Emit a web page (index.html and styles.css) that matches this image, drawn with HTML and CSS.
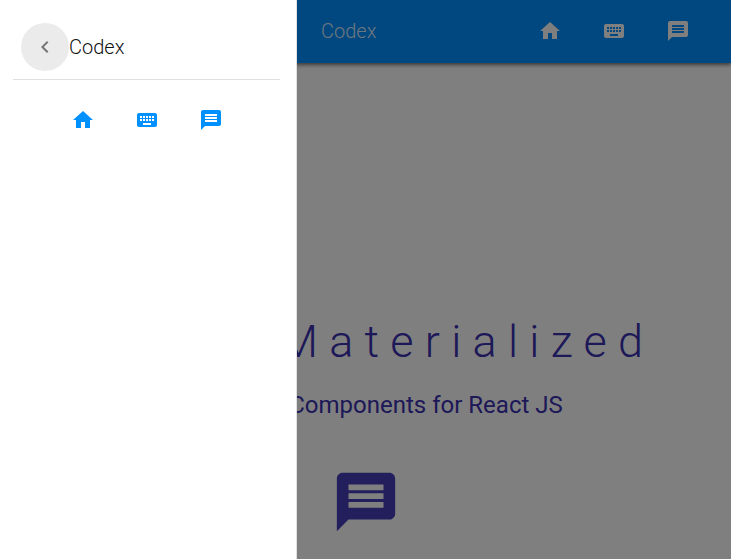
FILE: index.html
```html
<!DOCTYPE html>
<html lang="en">
<head>
<meta charset="utf-8">
<title>Codex</title>
<link rel="stylesheet" href="styles.css">
</head>
<body>
<svg class="sprite" aria-hidden="true">
  <symbol id="home" viewBox="0 0 24 24"><path d="M10 20v-6h4v6h5v-8h3L12 3 2 12h3v8z"/></symbol>
  <symbol id="keyboard" viewBox="0 0 24 24"><path d="M20 5H4c-1.1 0-1.99.9-1.99 2L2 17c0 1.1.9 2 2 2h16c1.1 0 2-.9 2-2V7c0-1.1-.9-2-2-2zm-9 3h2v2h-2V8zm0 3h2v2h-2v-2zM8 8h2v2H8V8zm0 3h2v2H8v-2zm-1 2H5v-2h2v2zm0-3H5V8h2v2zm9 7H8v-2h8v2zm0-4h-2v-2h2v2zm0-3h-2V8h2v2zm3 3h-2v-2h2v2zm0-3h-2V8h2v2z"/></symbol>
  <symbol id="chat" viewBox="0 0 24 24"><path d="M20 2H4c-1.1 0-1.99.9-1.99 2L2 22l4-4h14c1.1 0 2-.9 2-2V4c0-1.1-.9-2-2-2zm-2 12H6v-2h12v2zm0-3H6V9h12v2zm0-3H6V6h12v2z"/></symbol>
  <symbol id="back" viewBox="0 0 24 24"><path d="M15.41 7.41 14 6l-6 6 6 6 1.41-1.41L10.83 12z"/></symbol>
</svg>
<div class="page">
  <header class="appbar">
    <span class="brand">Codex</span>
    <nav class="links">
      <svg><use href="#home"/></svg>
      <svg><use href="#keyboard"/></svg>
      <svg><use href="#chat"/></svg>
    </nav>
  </header>
  <main class="hero">
    <h1>Materialized</h1>
    <h2>Components for React JS</h2>
    <svg class="hero-icon"><use href="#chat"/></svg>
  </main>
</div>
<div class="backdrop"></div>
<aside class="drawer">
  <div class="drawer-head">
    <button class="back" aria-label="Close"><svg><use href="#back"/></svg></button>
    <span class="brand">Codex</span>
  </div>
  <nav class="links drawer-links">
    <svg><use href="#home"/></svg>
    <svg><use href="#keyboard"/></svg>
    <svg><use href="#chat"/></svg>
  </nav>
</aside>
</body>
</html>
```
FILE: styles.css
```css
* { box-sizing: border-box; }
body { margin: 0; height: 559px; overflow: hidden; font-family: Roboto, sans-serif; }
svg { display: block; width: 24px; height: 24px; fill: currentColor; }
.sprite { position: absolute; width: 0; height: 0; }
.page { height: 559px; display: flex; flex-direction: column; background: #fff; }
.brand { font-size: 20px; line-height: 32px; font-weight: 300; }
.appbar { height: 63px; flex: none; display: flex; align-items: center; justify-content: space-between; padding: 0 41px 2px 321px; background: #0091ff; color: #fff; box-shadow: 0 2px 4px rgba(0,0,0,.35), 0 1px 4px rgba(0,0,0,.35); }
.appbar .brand { color: rgba(255,255,255,.87); }
.links { display: flex; gap: 40px; }
.hero { display: flex; flex-direction: column; align-items: center; padding-top: 247px; color: #3b30b0; }
h1, h2 { margin: 0; white-space: nowrap; }
h1 { width: 372px; font-size: 45px; line-height: 64px; font-weight: 300; letter-spacing: .25em; margin-left: 199px; }
h2 { font-size: 24px; line-height: 32px; font-weight: 400; margin: 15px 0 0 121px; }
.hero-icon { width: 70px; height: 70px; margin-top: 46px; color: #443eb9; }
.backdrop { position: fixed; inset: 0; background: rgba(0,0,0,.5); }
.drawer { position: fixed; inset: 0 auto 0 0; width: 297px; padding: 15px 16px 0 13px; background: #fff; border-right: 1px solid #e0e0e0; }
.drawer-head { display: flex; align-items: center; height: 65px; padding: 0 8px; border-bottom: 1px solid #e0e0e0; color: #111; }
.back { width: 48px; height: 48px; border: 0; border-radius: 50%; padding: 0; display: grid; place-items: center; background: #ebebeb; color: #757575; }
.drawer-links { justify-content: center; margin: 28px 0 0 1px; color: #0091ff; }
```
